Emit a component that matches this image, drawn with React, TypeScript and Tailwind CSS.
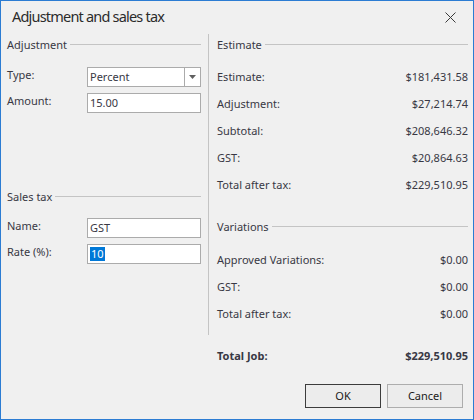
import React from 'react';

const font = { fontFamily: '"Noto Sans", "Liberation Sans", sans-serif' };

function GroupHeader({ title }: { title: string }) {
  return (
    <div className="flex items-center h-[20px] gap-[3px]">
      <span className="leading-[15px]">{title}</span>
      <div className="flex-1 h-px bg-[#c4c4c4] mt-px" />
    </div>
  );
}

function Row({ label, value, bold }: { label: string; value: string; bold?: boolean }) {
  return (
    <div className={`flex items-center justify-between h-[27px] ${bold ? 'font-bold' : ''}`}>
      <span>{label}</span>
      <span>{value}</span>
    </div>
  );
}

export default function App() {
  return (
    <div
      className="w-[474px] h-[420px] border border-[#2b7cd3] bg-[#f0f0f0] text-[#383844] text-[11px] flex flex-col"
      style={font}
    >
      {/* Title bar */}
      <div className="h-[33px] flex items-center justify-between pl-[11px] pr-[17px] shrink-0">
        <span className="text-[14.5px] tracking-[-0.8px] text-[#2b2b2b] leading-none mb-[2px]">Adjustment and sales tax</span>
        <svg width="11" height="11" viewBox="0 0 11 11" className="mb-[1px]">
          <path d="M0.5 0.5 L10.5 10.5 M10.5 0.5 L0.5 10.5" stroke="#3a3a3a" strokeWidth="1" />
        </svg>
      </div>

      <div className="flex pl-[6px]">
        {/* Left column */}
        <div className="w-[194px] flex flex-col">
          <GroupHeader title="Adjustment" />
          <div className="flex items-start mt-[13px]">
            <span className="w-[80px] leading-[15px]">Type:</span>
            <div className="flex w-[114px] h-[20px] border border-[#ababab] bg-white">
              <span className="flex-1 pl-[2px] leading-[18px]">Percent</span>
              <div className="w-[16px] border-l border-[#ababab] flex items-center justify-center">
                <svg width="7" height="4" viewBox="0 0 7 4">
                  <path d="M0 0 H7 L3.5 4 Z" fill="#606060" />
                </svg>
              </div>
            </div>
          </div>
          <div className="flex items-start mt-[6px]">
            <span className="w-[80px] leading-[15px]">Amount:</span>
            <div className="w-[114px] h-[20px] border border-[#ababab] bg-white pl-[2px] leading-[18px]">15.00</div>
          </div>

          <div className="mt-[73px]">
            <GroupHeader title="Sales tax" />
          </div>
          <div className="flex items-start mt-[12px]">
            <span className="w-[80px] leading-[15px]">Name:</span>
            <div className="w-[114px] h-[20px] border border-[#ababab] bg-white pl-[2px] leading-[18px]">GST</div>
          </div>
          <div className="flex items-start mt-[6px]">
            <span className="w-[80px] leading-[15px]">Rate (%):</span>
            <div className="w-[114px] h-[20px] border border-[#ababab] bg-white pl-[2px] flex items-center">
              <span className="bg-[#0078d7] text-white leading-[14px] px-px">10</span>
            </div>
          </div>
        </div>

        {/* Separator */}
        <div className="w-px h-[301px] bg-[#c4c4c4] ml-[7px] mr-[8px] shrink-0" />

        {/* Right column */}
        <div className="w-[251px] flex flex-col">
          <GroupHeader title="Estimate" />
          <div className="mt-[10px]">
            <Row label="Estimate:" value="$181,431.58" />
            <Row label="Adjustment:" value="$27,214.74" />
            <Row label="Subtotal:" value="$208,646.32" />
            <Row label="GST:" value="$20,864.63" />
            <Row label="Total after tax:" value="$229,510.95" />
          </div>
          <div className="mt-[17px]">
            <GroupHeader title="Variations" />
          </div>
          <div className="mt-[11px]">
            <Row label="Approved Variations:" value="$0.00" />
            <Row label="GST:" value="$0.00" />
            <Row label="Total after tax:" value="$0.00" />
          </div>
          <div className="mt-[15px]">
            <Row label="Total Job:" value="$229,510.95" bold />
          </div>
        </div>
      </div>

      {/* Buttons */}
      <div className="flex justify-end gap-[6px] pr-[10px] mt-[14px]">
        <button className="w-[76px] h-[24px] border border-[#3c3c3c] bg-[#ececec] text-[#1a1a1a]">OK</button>
        <button className="w-[76px] h-[24px] border border-[#adadad] bg-[#ececec] text-[#1a1a1a]">Cancel</button>
      </div>
    </div>
  );
}
